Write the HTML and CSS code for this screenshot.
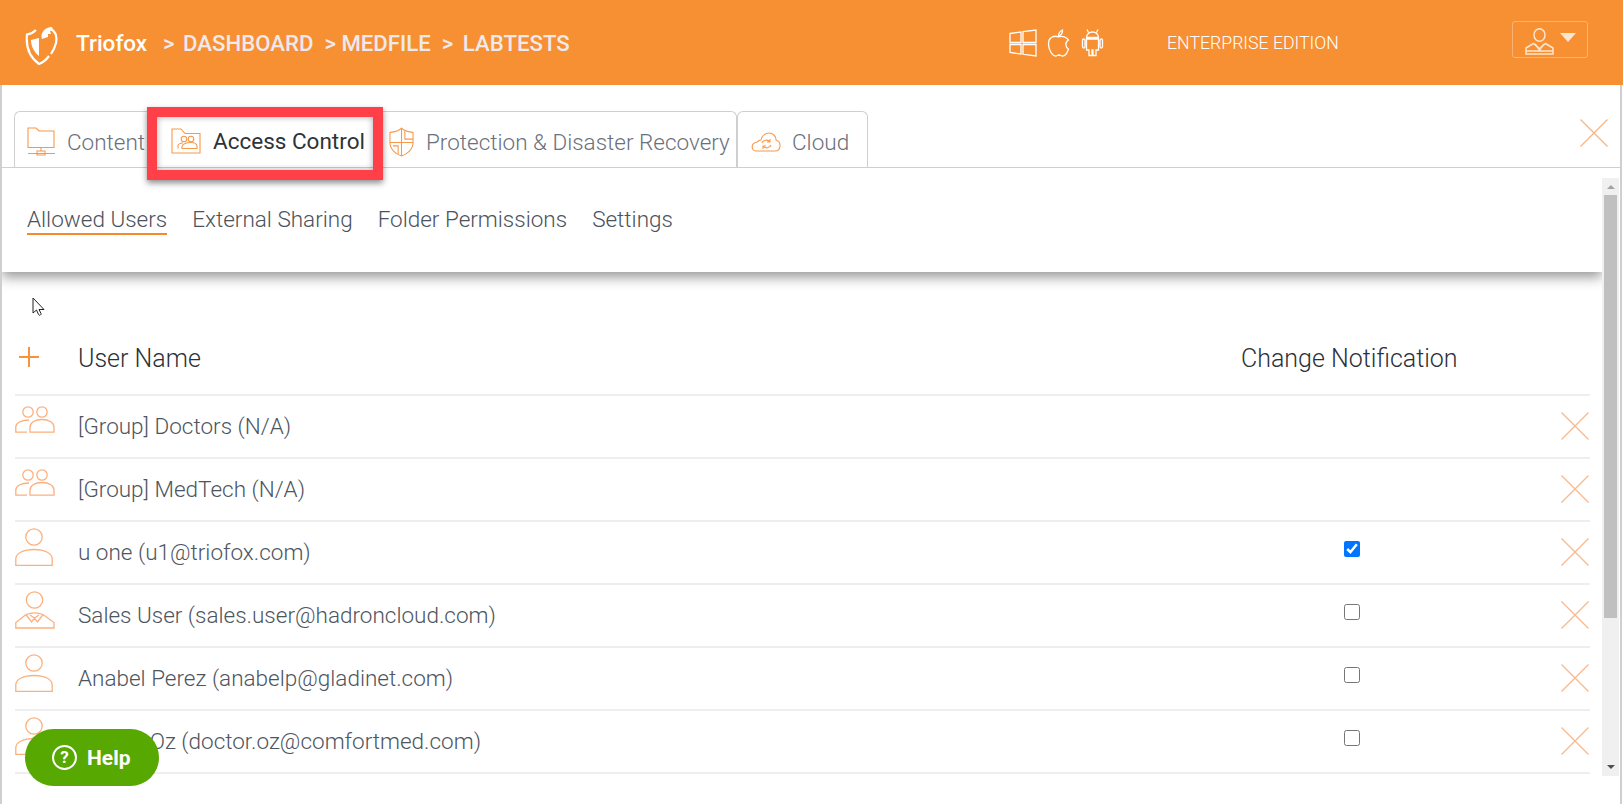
FILE: index.html
```html
<!DOCTYPE html>
<html lang="en">
<head>
<meta charset="utf-8">
<title>Triofox</title>
<link rel="stylesheet" href="styles.css">
</head>
<body>
<svg class="defs" width="0" height="0" aria-hidden="true">
  <symbol id="person" viewBox="0 0 38 38">
    <circle cx="19" cy="9" r="8.2"/>
    <path d="M.8 37.3V31C.8 25 9 21.5 19 21.5S37.2 25 37.2 31v6.3z"/>
  </symbol>
  <symbol id="suit" viewBox="0 0 40 38">
    <circle cx="19.500" cy="9" r="8.2"/>
    <path d="M.8 37V31.500L11 23.500C16 21.500 23 21.500 28 23.500l11 8V37z"/>
    <path d="M11 23.500l5.500 7.500 3-4 3 4 5.500-7.500M15 24l4.500 3 4.500-3"/>
  </symbol>
  <symbol id="group" viewBox="0 0 40 27">
    <circle cx="13" cy="6" r="5.200"/>
    <circle cx="27" cy="6" r="5.200"/>
    <path d="M14 14C6 14 .8 17 .8 21v5.200H12"/>
    <path d="M15 26.200V21c0-4 4.500-7.500 12-7.500S39 17 39 21v5.200z"/>
  </symbol>
  <symbol id="cross" viewBox="0 0 28 28">
    <path d="M.5.500l27 27M27.500.500l-27 27"/>
  </symbol>
</svg>

<header class="topbar">
  <div class="brand">
    <svg class="logo" viewBox="0 0 33 40" aria-hidden="true">
      <path d="M11 5C8 8 5 9 2 9.500 1 19 3 31 14 39c3-1 7-4 10-8"/>
      <path d="M26 4c5 3 6 9 5 14-1 4-3 8-5 11"/>
      <path d="M6 15l8-2v18C9 27 6 21 6 15z" class="logo-fill"/>
      <path d="M17 14C15 9 19 2 27 2l1 3-3 1 1 3-3 0 0 3z" class="logo-fill"/>
    </svg>
    <span class="brand-name">Triofox</span>
  </div>
  <nav class="crumbs">
    <span class="crumb"><span class="sep">&gt;</span>DASHBOARD</span>
    <span class="crumb"><span class="sep sep-tight">&gt;</span>MEDFILE</span>
    <span class="crumb"><span class="sep sep-wide">&gt;</span>LABTESTS</span>
  </nav>
  <div class="os-icons">
    <svg class="os-win" viewBox="0 0 28 28" aria-hidden="true">
      <path d="M1 4.500l11-1.500v10.500H1zM14 2.700L27 1v12.500H14zM1 15.500h11V25L1 23.500zM14 15.500h13V27l-13-1.700z"/>
    </svg>
    <svg class="os-apple" viewBox="0 0 22 28" aria-hidden="true">
      <path d="M11 8C8 6.500 1 7 1 15c0 6 4 12 7 12 1.500 0 2-1 3.500-1s2 1 3.500 1c3 0 5-4 6-7-3-1.500-4-6.500 0-9-1.500-3-6.500-4.500-10-3z"/>
      <path d="M11 7c0-3 2-5 4-6 .5 3-1.500 5.500-4 6z"/>
    </svg>
    <svg class="os-android" viewBox="0 0 22 29" aria-hidden="true">
      <path d="M5 11h12v11h-2.500v5.500h-3V22h-1v5.500h-3V22H5zM5 9.500C5 6 8 4 11 4s6 2 6 5.500zM2 11c1 0 1.500.5 1.500 1.500v6c0 2-2.500 2-2.500 0v-6C1 11.500 1 11 2 11zM20 11c1 0 1 .5 1 1.500v6c0 2-2.500 2-2.500 0v-6c0-1 .5-1.500 1.500-1.500zM7 4.500L5.500 1.500M15 4.500l1.500-3"/>
    </svg>
  </div>
  <span class="edition">ENTERPRISE EDITION</span>
  <button class="user-menu" type="button" aria-label="User menu">
    <svg class="user-menu-icon" viewBox="0 0 29 27" aria-hidden="true">
      <ellipse cx="14.500" cy="7" rx="5.500" ry="6.300"/>
      <path d="M1 26v-6l7.500-4.500 6 5 6-5L28 20v6z"/>
      <path d="M1 23h27M10 16l4.500 6 4.500-6"/>
    </svg>
    <span class="caret"></span>
  </button>
</header>

<main class="frame">
  <div class="tabs-row">
    <ul class="tabs">
      <li class="tab tab-content">
        <svg class="tab-icon icon-monitor" viewBox="0 0 28 29" aria-hidden="true">
          <path d="M1 20.500V1h8l3 3h15v16.500zM1 26.500h27M14 20.500v3M10 24h8v4h-8z"/>
        </svg>
        <span>Content</span>
      </li>
      <li class="tab tab-active">
        <svg class="tab-icon icon-folder" viewBox="0 0 30 26" aria-hidden="true">
          <path d="M1 25V1h9l4 4.500h15V25z"/>
          <circle cx="13" cy="11" r="2.800"/>
          <circle cx="20" cy="11" r="2.800"/>
          <path d="M7 20.500v-3c0-1 2-2.500 5-2.500M11 20.500v-2c0-2 4-4 9-4s6 2 6 4v2z"/>
        </svg>
        <span>Access Control</span>
      </li>
      <li class="tab tab-protection">
        <svg class="tab-icon icon-shield" viewBox="0 0 26 31" aria-hidden="true">
          <path d="M13 1c3 3 7 4 12 4.500V16c0 7-6 12-12 14C7 28 1 23 1 16V5.500C6 5 10 4 13 1z"/>
          <path d="M13 1v29M1 16h24M16.500 4v8.500H25M4 19.500h5.500V28"/>
        </svg>
        <span>Protection &amp; Disaster Recovery</span>
      </li>
      <li class="tab tab-cloud">
        <svg class="tab-icon icon-cloud" viewBox="0 0 30 20" aria-hidden="true">
          <path d="M7 19H5c-5 0-5.500-8 1-9 1-1 2-2 4-2C11 3 15 1 18 1c4 0 7 3 7 7 6 2 5 11-1 11z"/>
          <path d="M11 11c1-3 6-4 8-1M19 7v3h-3M20 13c-1 3-6 4-8 1M12 17v-3h3"/>
        </svg>
        <span>Cloud</span>
      </li>
    </ul>
    <svg class="close-all" aria-hidden="true"><use href="#cross"/></svg>
  </div>

  <div class="pane">
    <div class="pane-body">
      <nav class="subnav">
        <a class="subnav-link is-current">Allowed Users</a>
        <a class="subnav-link">External Sharing</a>
        <a class="subnav-link">Folder Permissions</a>
        <a class="subnav-link">Settings</a>
      </nav>
      <section class="users">
        <div class="row row-head">
          <span class="add" aria-label="Add">
            <svg class="add-icon" viewBox="0 0 20 20" aria-hidden="true"><path d="M10 0v20M0 10h20"/></svg>
          </span>
          <span class="name">User Name</span>
          <span class="notify">Change Notification</span>
          <span class="remove"></span>
        </div>
        <div class="row">
          <span class="avatar"><svg class="ico-group"><use href="#group"/></svg></span>
          <span class="name">[Group] Doctors (N/A)</span>
          <span class="notify"></span>
          <span class="remove"><svg class="ico-x"><use href="#cross"/></svg></span>
        </div>
        <div class="row">
          <span class="avatar"><svg class="ico-group"><use href="#group"/></svg></span>
          <span class="name">[Group] MedTech (N/A)</span>
          <span class="notify"></span>
          <span class="remove"><svg class="ico-x"><use href="#cross"/></svg></span>
        </div>
        <div class="row">
          <span class="avatar"><svg class="ico-person"><use href="#person"/></svg></span>
          <span class="name">u one (u1@triofox.com)</span>
          <span class="notify"><input class="check" type="checkbox" checked></span>
          <span class="remove"><svg class="ico-x"><use href="#cross"/></svg></span>
        </div>
        <div class="row">
          <span class="avatar"><svg class="ico-suit"><use href="#suit"/></svg></span>
          <span class="name">Sales User (sales.user@hadroncloud.com)</span>
          <span class="notify"><input class="check" type="checkbox"></span>
          <span class="remove"><svg class="ico-x"><use href="#cross"/></svg></span>
        </div>
        <div class="row">
          <span class="avatar"><svg class="ico-person"><use href="#person"/></svg></span>
          <span class="name">Anabel Perez (anabelp@gladinet.com)</span>
          <span class="notify"><input class="check" type="checkbox"></span>
          <span class="remove"><svg class="ico-x"><use href="#cross"/></svg></span>
        </div>
        <div class="row">
          <span class="avatar"><svg class="ico-person"><use href="#person"/></svg></span>
          <span class="name">Doctor Oz (doctor.oz@comfortmed.com)</span>
          <span class="notify"><input class="check" type="checkbox"></span>
          <span class="remove"><svg class="ico-x"><use href="#cross"/></svg></span>
        </div>
      </section>
    </div>
    <div class="scrollbar" aria-hidden="true">
      <span class="arrow arrow-up"></span>
      <span class="thumb"></span>
      <span class="arrow arrow-down"></span>
    </div>
  </div>
</main>

<div class="highlight" aria-hidden="true"></div>
<svg class="cursor" viewBox="0 0 14 20" aria-hidden="true">
  <path d="M1 1v15l3.500-3 2 4.500c.5 1.500 3 .5 2.500-1L7 12.500h5z"/>
</svg>
<button class="help" type="button">
  <span class="help-mark">?</span>
  <span>Help</span>
</button>
</body>
</html>
```

FILE: styles.css
```css
* { box-sizing: border-box; }
html, body { height: 100%; }
body {
  margin: 0;
  width: 1623px;
  height: 804px;
  overflow: hidden;
  background: #fff;
  font-family: Roboto, "Liberation Sans", sans-serif;
  position: relative;
  display: flex;
  flex-direction: column;
}
.defs { position: absolute; }

/* Top bar */
.topbar {
  height: 85px;
  flex: none;
  background: #f79032;
  display: flex;
  align-items: center;
  color: #fff;
}
.brand { display: flex; align-items: center; margin-left: 25px; width: 122px; flex: none; }
.logo {
  width: 33px;
  height: 40px;
  margin-top: 5px;
  flex: none;
  fill: none;
  stroke: #fff;
  stroke-width: 2.200;
}
.logo-fill { fill: #fff; stroke: none; }
.brand-name { font-size: 22.500px; font-weight: 500; margin-left: 18px; }
.crumbs { display: flex; margin-left: 16px; gap: 11px; width: 780px; flex: none; }
.crumb { font-size: 22.200px; font-weight: 500; color: #eee9ee; white-space: nowrap; display: flex; }
.sep { width: 20px; flex: none; }
.sep-tight { width: 17px; }
.sep-wide { width: 21px; }
.os-icons { display: flex; align-items: center; gap: 10px; margin-left: 66px; flex: none; }
.os-icons svg { fill: none; stroke: #fff; stroke-width: 1.300; }
.os-win { width: 28px; height: 28px; }
.os-apple { width: 23px; height: 28px; }
.os-android { width: 25px; height: 29px; }
.edition { font-size: 17.700px; font-weight: 300; margin-left: 62px; width: 177px; flex: none; white-space: nowrap; }
.user-menu {
  margin: -6px 0 0 168px;
  width: 76px;
  height: 37px;
  flex: none;
  background: transparent;
  border: 1px solid #fbb274;
  border-radius: 3px;
  padding: 0 0 0 12px;
  display: flex;
  align-items: flex-start;
}
.user-menu-icon {
  width: 29px;
  height: 27px;
  margin-top: 6px;
  flex: none;
  fill: none;
  stroke: #fde6d0;
  stroke-width: 1.500;
}
.caret {
  margin: 11px 0 0 6px;
  width: 0;
  height: 0;
  flex: none;
  border-left: 8px solid transparent;
  border-right: 8px solid transparent;
  border-top: 9px solid #fde6d0;
}

/* Frame */
.frame {
  flex: 1;
  min-height: 0;
  display: flex;
  flex-direction: column;
  border-left: 2px solid #cfcfcf;
  border-right: 2px solid #cfcfcf;
  margin-right: 1px;
}
.tabs-row {
  height: 83px;
  flex: none;
  display: flex;
  align-items: flex-end;
  border-bottom: 1px solid #cfcfcf;
  padding-left: 12px;
  position: relative;
}
.tabs { display: flex; list-style: none; margin: 0; padding: 0; height: 56px; }
.tab {
  display: flex;
  align-items: center;
  border: 1px solid #cfcfcf;
  border-bottom: 0;
  border-radius: 6px 6px 0 0;
  font-size: 22.500px;
  font-weight: 300;
  color: #6a717c;
  padding-top: 4px;
  white-space: nowrap;
}
.tab-content { width: 138px; padding-left: 12px; border-right: 0; border-radius: 6px 0 0 0; }
.tab-active { width: 229px; padding-left: 19px; border: 0; color: #2f3338; font-weight: 400; }
.tab-protection { width: 356px; padding-left: 8px; border-left: 0; border-radius: 0 6px 0 0; }
.tab-cloud { width: 131px; padding-left: 13px; }
.tab span { margin-left: 12px; }
.tab-cloud span { margin-left: 11px; }
.tab-icon { fill: none; stroke: #f8994a; stroke-width: 1.100; flex: none; }
.icon-monitor { width: 28px; height: 29px; }
.icon-folder { width: 30px; height: 26px; }
.icon-shield { width: 25px; height: 30px; }
.icon-cloud { width: 30px; height: 20px; }
.close-all {
  position: absolute;
  left: 1578px;
  top: 34px;
  width: 28px;
  height: 28px;
  fill: none;
  stroke: #fbb482;
  stroke-width: 1.300;
}

/* Pane */
.pane { flex: 1; min-height: 0; display: flex; padding-top: 10px; align-items: flex-start; }
.pane-body { width: 1600px; flex: none; }
.subnav {
  height: 94px;
  display: flex;
  gap: 25px;
  padding: 28px 0 0 25px;
  box-shadow: 0 5px 12px rgba(0, 0, 0, .42);
  clip-path: inset(0 0 -30px 0);
  align-items: flex-start;
  position: relative;
}
.subnav-link {
  font-size: 22.500px;
  font-weight: 300;
  color: #4b525c;
  border-bottom: 2px solid transparent;
  line-height: 27px;
}
.subnav-link.is-current { border-bottom-color: #f58a2b; }

.users { padding: 55px 12px 0 13px; }
.row {
  height: 63px;
  display: flex;
  align-items: center;
  padding-bottom: 2px;
  border-bottom: 2px solid #eeeeee;
  font-size: 22.500px;
  font-weight: 300;
  color: #4d5560;
}
.row-head { height: 69px; padding-bottom: 4px; color: #2c3138; font-size: 25px; }
.add, .avatar { width: 63px; flex: none; display: flex; }
.add { padding-left: 4px; }
.avatar { align-self: flex-start; padding-top: 6px; }
.add-icon { width: 20px; height: 20px; margin-top: -3px; fill: none; stroke: #f8923b; stroke-width: 2; }
.name { width: 1159px; flex: none; white-space: nowrap; }
.notify { width: 260px; flex: none; white-space: nowrap; display: flex; }
.row .notify { padding-left: 107px; }
.row-head .notify { padding-left: 4px; }
.remove { flex: 1; display: flex; justify-content: flex-end; padding-right: 1px; }
.ico-group { width: 40px; height: 27px; margin-top: 4px; }
.ico-person { width: 38px; height: 38px; }
.ico-suit { width: 40px; height: 38px; }
.ico-group, .ico-person, .ico-suit { fill: none; stroke: #fcb07e; stroke-width: 1.300; }
.ico-x { width: 28px; height: 28px; fill: none; stroke: #fbb88a; stroke-width: 1.300; }
.check { width: 16px; height: 16px; margin: -6px 0 0; accent-color: #0075ff; }

/* Scrollbar */
.scrollbar {
  width: 17px;
  height: 598px;
  flex: none;
  background: #f0f0f0;
  display: flex;
  flex-direction: column;
  align-items: center;
}
.arrow { width: 0; height: 0; border-left: 4px solid transparent; border-right: 4px solid transparent; }
.arrow-up { border-bottom: 4px solid #a3a3a3; margin: 7px 0 6px; }
.arrow-down { border-top: 4px solid #505050; margin: auto 0 7px; }
.thumb { width: 13px; height: 423px; background: #c0c0c0; }

/* Overlays */
.highlight {
  position: absolute;
  left: 147px;
  top: 107px;
  width: 236px;
  height: 73px;
  border: 10px solid #ff4049;
  box-shadow: 0 3px 6px rgba(0, 0, 0, .45), inset 0 0 6px rgba(0, 0, 0, .35);
}
.cursor {
  position: absolute;
  left: 32px;
  top: 297px;
  width: 14px;
  height: 20px;
  fill: #fff;
  stroke: #222;
  stroke-width: 1;
}
.help {
  position: absolute;
  left: 25px;
  top: 729px;
  width: 134px;
  height: 57px;
  border: 0;
  border-radius: 29px;
  background: #57a800;
  color: #fff;
  font-family: Roboto, "Liberation Sans", sans-serif;
  font-size: 21px;
  font-weight: 700;
  display: flex;
  align-items: center;
  padding: 0 0 0 27px;
  gap: 10px;
}
.help-mark {
  width: 25px;
  height: 25px;
  border: 2.500px solid #fff;
  border-radius: 50%;
  font-size: 17px;
  line-height: 20px;
  text-align: center;
}
```
